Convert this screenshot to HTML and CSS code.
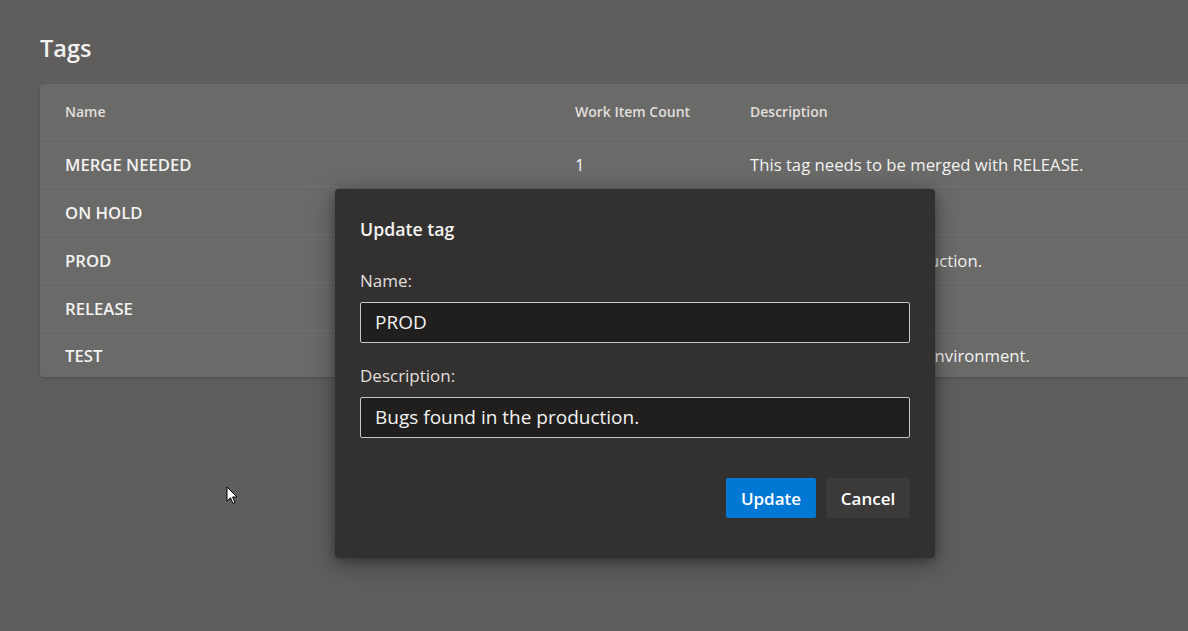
FILE: index.html
```html
<!DOCTYPE html>
<html>
<head>
<meta charset="utf-8">
<link rel="stylesheet" href="styles.css">
</head>
<body>
<div class="page">
  <h1 class="title">Tags</h1>
  <div class="card">
    <div class="row head">
      <div class="c-name">Name</div>
      <div class="c-count">Work Item Count</div>
      <div class="c-desc">Description</div>
    </div>
    <div class="row">
      <div class="c-name strong">MERGE NEEDED</div>
      <div class="c-count">1</div>
      <div class="c-desc">This tag needs to be merged with RELEASE.</div>
    </div>
    <div class="row">
      <div class="c-name strong">ON HOLD</div>
      <div class="c-count"></div>
      <div class="c-desc"></div>
    </div>
    <div class="row">
      <div class="c-name strong">PROD</div>
      <div class="c-count"></div>
      <div class="c-desc">Bugs found in the production.</div>
    </div>
    <div class="row">
      <div class="c-name strong">RELEASE</div>
      <div class="c-count"></div>
      <div class="c-desc"></div>
    </div>
    <div class="row last">
      <div class="c-name strong">TEST</div>
      <div class="c-count"></div>
      <div class="c-desc">Bugs found in the test environment.</div>
    </div>
  </div>
</div>

<div class="dialog">
  <div class="d-title">Update tag</div>
  <label class="d-label">Name:</label>
  <div class="d-input">PROD</div>
  <label class="d-label">Description:</label>
  <div class="d-input">Bugs found in the production.</div>
  <div class="d-actions">
    <button class="btn primary">Update</button>
    <button class="btn secondary">Cancel</button>
  </div>
</div>

<svg class="cursor" width="14" height="20" viewBox="0 0 14 20">
  <path d="M1 1 L1 15 L4.5 11.8 L7 17.5 L9 16.6 L6.6 11 L11 11 Z" fill="#fff" stroke="#000" stroke-width="1" stroke-linejoin="miter"/>
</svg>
</body>
</html>
```

FILE: styles.css
```css
* { box-sizing: border-box; }
html, body {
  margin: 0;
  height: 100%;
}
body {
  background: #5f5e5c;
  font-family: "Open Sans", "Noto Sans", sans-serif;
  color: #f3f2f1;
  overflow: hidden;
  position: relative;
}
.page {
  padding: 32px 0 0 40px;
}
.title {
  margin: 0;
  font-size: 23.5px;
  font-weight: 600;
  line-height: 32px;
  color: #f3f2f1;
}
.card {
  margin-top: 20px;
  background: #6a6a68;
  border-radius: 4px 0 0 4px;
  box-shadow: 0 1px 3px rgba(0,0,0,0.18);
}
.row {
  display: flex;
  align-items: center;
  height: 48px;
  border-bottom: 1px solid #727270;
  font-size: 16.7px;
  padding-top: 3px;
}
.row.last { border-bottom: none; height: 46px; }
.row.head {
  height: 55px;
  padding-top: 0;
  font-size: 14px;
  font-weight: 600;
  color: #e1dfdd;
}
.c-name { width: 535px; padding-left: 25px; }
.c-count { width: 175px; }
.c-desc { flex: 1; }
.strong { font-weight: 600; }

.dialog {
  position: absolute;
  left: 335px;
  top: 189px;
  width: 600px;
  height: 369px;
  background: #323130;
  border-radius: 4px;
  box-shadow: 0 6px 24px rgba(0,0,0,0.35), 0 2px 8px rgba(0,0,0,0.25);
  padding: 28px 25px 0 25px;
  display: flex;
  flex-direction: column;
}
.d-title {
  font-size: 17.7px;
  font-weight: 600;
  line-height: 24px;
  margin-bottom: 30px;
}
.d-label {
  font-size: 17px;
  line-height: 20px;
  color: #e1dfdd;
  margin-bottom: 11px;
}
.d-input {
  height: 41px;
  background: #201f1e;
  border: 1px solid #c8c6c4;
  border-radius: 2px;
  padding: 0 14px;
  font-size: 19px;
  line-height: 39px;
  color: #f3f2f1;
  margin-bottom: 23px;
}
.d-actions {
  margin-top: 17px;
  display: flex;
  justify-content: flex-end;
  gap: 10px;
}
.btn {
  height: 40px;
  border: none;
  border-radius: 2px;
  font-family: inherit;
  font-size: 17px;
  font-weight: 600;
  color: #fff;
  padding: 0;
}
.primary { background: #0078d4; width: 90px; }
.secondary { background: #3b3a39; width: 84px; }

.cursor {
  position: absolute;
  left: 226px;
  top: 486px;
}
```
